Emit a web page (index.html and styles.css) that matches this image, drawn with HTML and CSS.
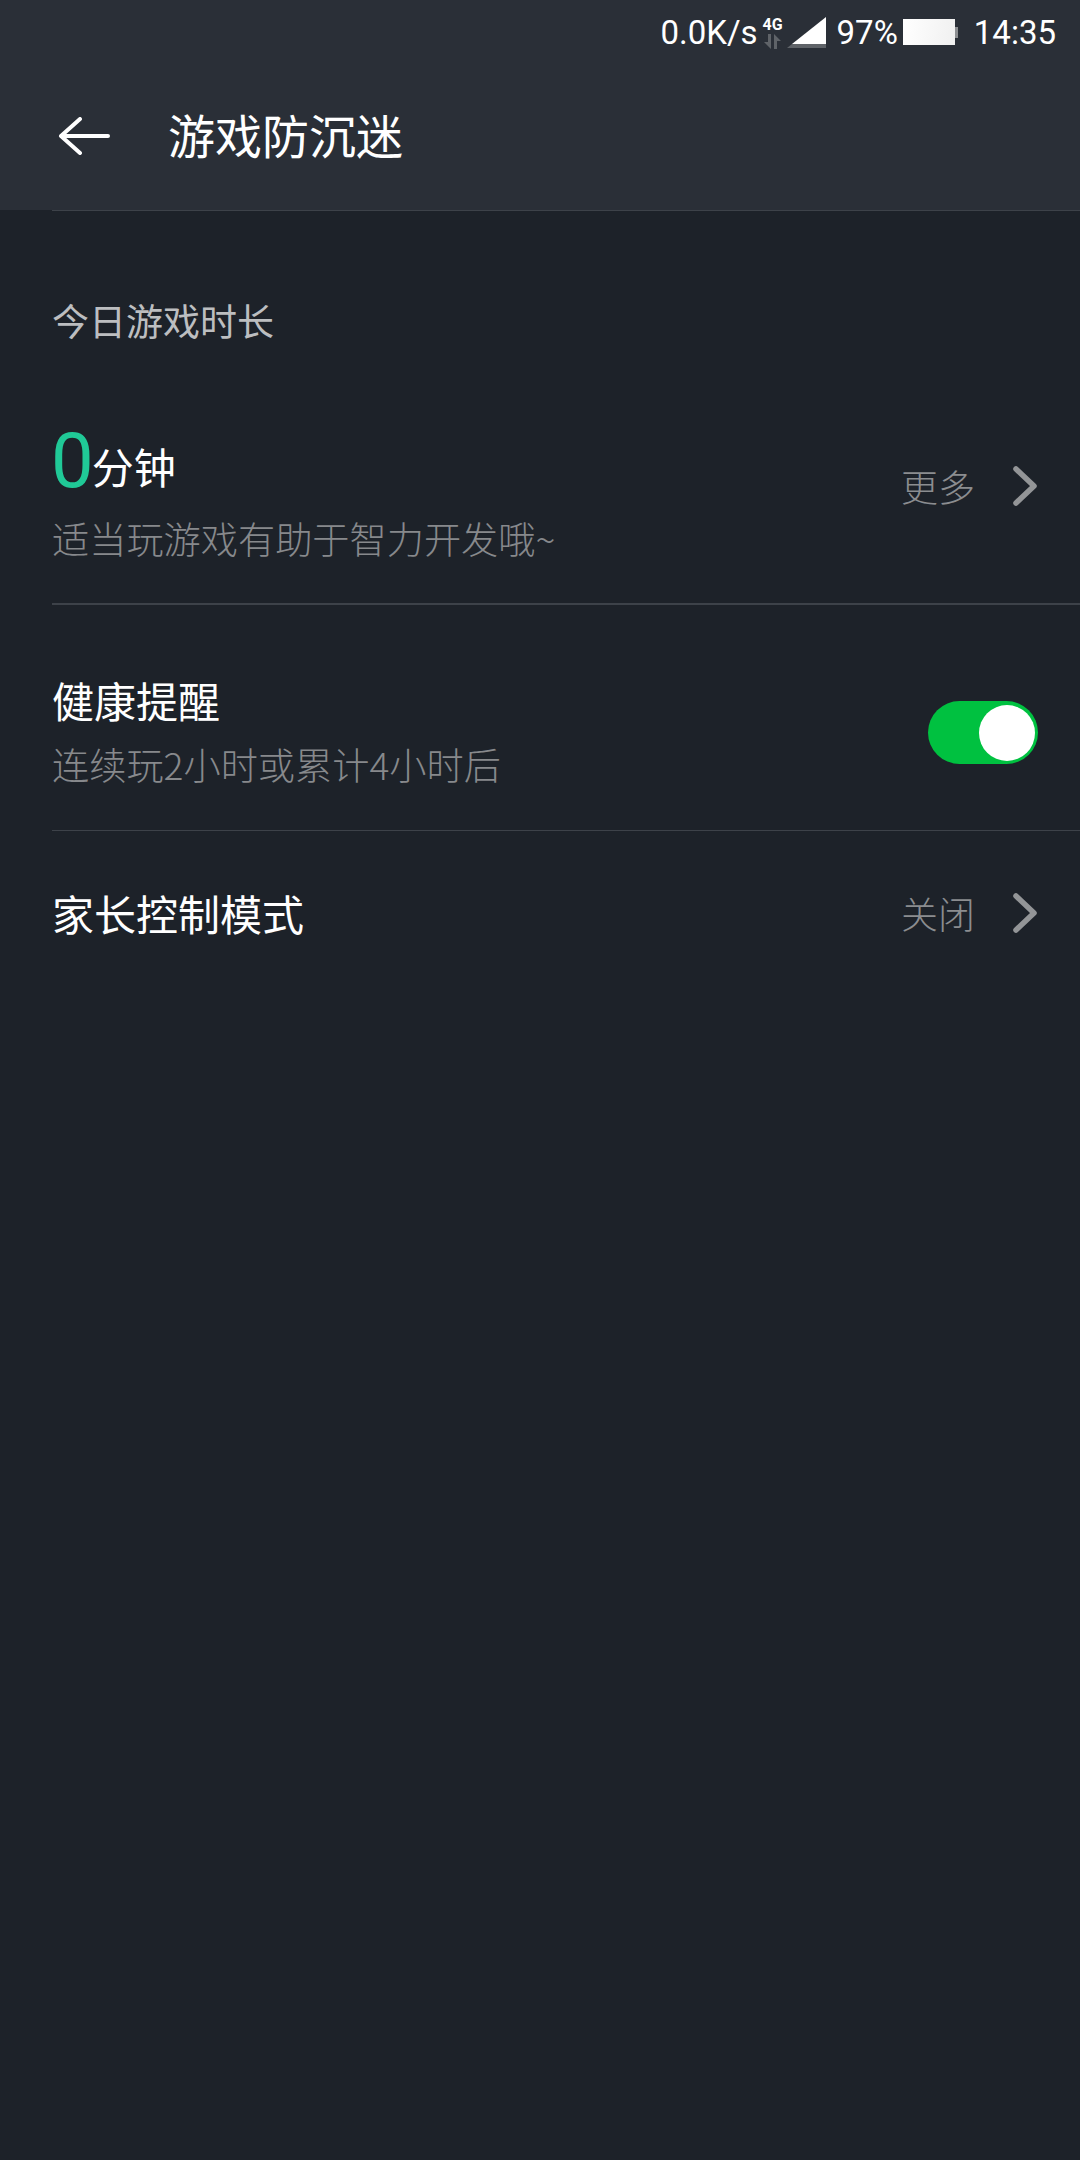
FILE: index.html
```html
<!DOCTYPE html>
<html lang="zh-CN">
<head>
    <meta charset="UTF-8">
    <meta name="viewport" content="width=device-width, initial-scale=1.0">
    <title>游戏防沉迷</title>
    <link rel="stylesheet" href="styles.css">
</head>
<body>
    <div class="app-header">
        <div class="status-bar">
            <span class="net-speed">0.0K/s</span>
            <div class="net-type">
                <span class="net-label">4G</span>
                <svg width="20" height="15" viewBox="0 0 20 15">
                    <path d="M5 0h3v15L1 8h4zM11 0l7 7h-4v8h-3z" fill="#5f6368"/>
                </svg>
            </div>
            <svg class="signal" width="39" height="31" viewBox="0 0 39 31">
                <path d="M39 0V27H5z" fill="#fff"/>
                <path d="M5 27H39v4H0z" fill="#5f6368"/>
            </svg>
            <span class="battery-pct">97%</span>
            <div class="battery">
                <div class="battery-body"></div>
                <div class="battery-cap"></div>
            </div>
            <span class="clock">14:35</span>
        </div>
        <div class="toolbar">
            <svg class="back-icon" width="52" height="38" viewBox="0 0 52 38">
                <path d="M22 2L3 19l19 17M3 19h47" fill="none" stroke="#fff" stroke-width="4" stroke-linecap="round" stroke-linejoin="round"/>
            </svg>
            <h1 class="page-title">游戏防沉迷</h1>
        </div>
    </div>

    <div class="content">
        <div class="section-title">今日游戏时长</div>

        <div class="row row-today">
            <div class="row-text today-text">
                <div class="today-value"><span class="today-num">0</span><span class="today-unit">分钟</span></div>
                <div class="row-sub">适当玩游戏有助于智力开发哦~</div>
            </div>
            <div class="row-action">
                <span class="action-label">更多</span>
                <svg class="chevron" width="26" height="40" viewBox="0 0 26 40">
                    <path d="M4 3l18 17L4 37" fill="none" stroke="#939597" stroke-width="5.5" stroke-linecap="round" stroke-linejoin="round"/>
                </svg>
            </div>
        </div>

        <div class="row row-health">
            <div class="row-text health-text">
                <div class="row-title">健康提醒</div>
                <div class="row-sub">连续玩2小时或累计4小时后</div>
            </div>
            <div class="toggle"><div class="toggle-knob"></div></div>
        </div>

        <div class="row row-parent">
            <div class="row-title">家长控制模式</div>
            <div class="row-action">
                <span class="action-label">关闭</span>
                <svg class="chevron" width="26" height="40" viewBox="0 0 26 40">
                    <path d="M4 3l18 17L4 37" fill="none" stroke="#939597" stroke-width="5.5" stroke-linecap="round" stroke-linejoin="round"/>
                </svg>
            </div>
        </div>
    </div>
</body>
</html>
```

FILE: styles.css
```css
body {
    font-family: "Noto Sans CJK SC", Roboto, sans-serif;
    font-weight: 300;
    background-color: #1d2229;
    margin: 0;
    padding: 0;
    height: 2160px;
    overflow: hidden;
}

.app-header {
    height: 210px;
    background-color: #2a2f37;
}

.status-bar {
    height: 60px;
    box-sizing: border-box;
    padding: 4px 24px 0 0;
    display: flex;
    align-items: center;
    justify-content: flex-end;
    font-family: Roboto, sans-serif;
    font-weight: 400;
    font-size: 33px;
    color: #fff;
}

.net-type {
    display: flex;
    flex-direction: column;
    align-items: center;
    margin-left: 3px;
    width: 24px;
}

.net-label {
    font-size: 16px;
    font-weight: 700;
    line-height: 18px;
}

.signal {
    margin-left: 2px;
}

.battery-pct {
    margin-left: 11px;
}

.battery {
    display: flex;
    align-items: center;
    margin-left: 5px;
}

.battery-body {
    width: 52px;
    height: 26px;
    background: linear-gradient(100deg, #fff, #f0f0f0);
}

.battery-cap {
    width: 3px;
    height: 11px;
    background-color: #8d8f92;
}

.clock {
    margin-left: 16px;
}

.toolbar {
    height: 150px;
    box-sizing: border-box;
    padding: 2px 0 0 58px;
    display: flex;
    align-items: center;
}

.page-title {
    margin: 0 0 5px 58px;
    font-size: 47px;
    font-weight: 400;
    color: #fff;
}

.content {
    margin-left: 52px;
    border-top: 1px solid #3d4249;
}

.section-title {
    padding-top: 82px;
    font-size: 37px;
    font-weight: 400;
    line-height: 54px;
    color: #bcbec0;
}

.row {
    display: flex;
    align-items: center;
    justify-content: space-between;
    box-sizing: border-box;
    padding-right: 42px;
    border-bottom: 1px solid #3d4249;
}

.row-today {
    height: 258px;
    padding-top: 21px;
    border-bottom-width: 2px;
}

.today-text {
    align-self: flex-end;
    margin-bottom: 38px;
}

.row-health {
    height: 226px;
    padding-top: 30px;
}

.health-text {
    margin-top: -4px;
}

.health-text .row-sub {
    margin-top: 7px;
}

.row-parent {
    height: 164px;
    border-bottom: none;
}

.today-value {
    line-height: 72px;
    margin-bottom: -5px;
}

.today-num {
    font-family: Roboto, sans-serif;
    font-weight: 400;
    font-size: 76px;
    margin-left: -1px;
    color: #20c997;
}

.today-unit {
    font-size: 42px;
    font-weight: 400;
    color: #fff;
    margin-left: -2px;
    vertical-align: 3px;
}

.row-title {
    font-size: 42px;
    font-weight: 400;
    line-height: 60px;
    color: #fff;
}

.row-sub {
    font-size: 37.2px;
    line-height: 54px;
    color: #87898c;
}

.row-action {
    display: flex;
    align-items: center;
}

.action-label {
    font-size: 37px;
    color: #8b8d90;
}

.chevron {
    margin-left: 37px;
}

.toggle {
    width: 110px;
    height: 63px;
    border-radius: 32px;
    background-color: #00c140;
    display: flex;
    align-items: center;
    justify-content: flex-end;
    padding-right: 3px;
    box-sizing: border-box;
}

.toggle-knob {
    width: 56px;
    height: 56px;
    border-radius: 50%;
    background-color: #fff;
}
```
